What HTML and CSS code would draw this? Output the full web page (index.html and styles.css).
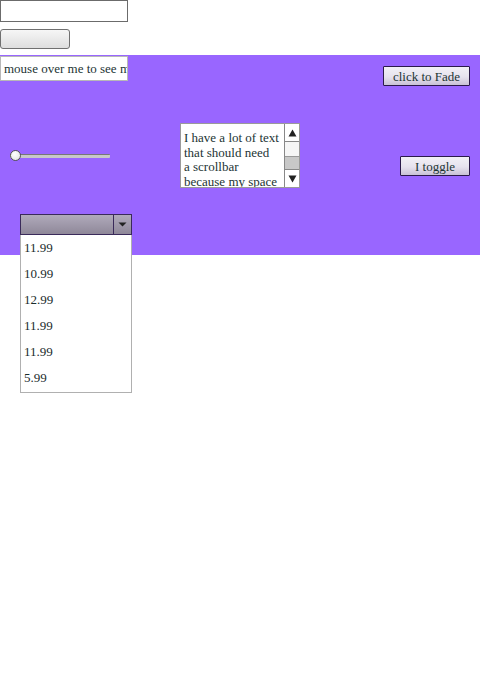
FILE: index.html
```html
<!DOCTYPE html>
<html>
<head>
<meta charset="utf-8">
<link rel="stylesheet" href="styles.css">
</head>
<body>
<div class="page">
  <div class="top">
    <input class="field" type="text">
    <button class="plain-btn"></button>
  </div>
  <div class="purple">
    <div class="row row-top">
      <div class="hover-field">mouse over me to see more text here</div>
      <button class="ui-btn fade-btn">click to Fade</button>
    </div>
    <div class="row row-mid">
      <div class="slider">
        <div class="track"></div>
        <div class="thumb"></div>
      </div>
      <div class="textbox">
        <div class="textbox-text"><span class="ln">I have a lot of text</span><span class="ln">that should need</span><span class="ln">a scrollbar</span><span class="ln">because my space</span><span class="ln">is limited</span></div>
        <div class="scrollbar">
          <div class="sb-btn sb-up"><svg width="9" height="8" viewBox="0 0 9 8"><path d="M4.5 0.5 L8.5 7.5 L0.5 7.5 Z" fill="#222"/></svg></div>
          <div class="sb-track"><div class="sb-thumb"></div></div>
          <div class="sb-btn sb-down"><svg width="9" height="8" viewBox="0 0 9 8"><path d="M0.5 0.5 L8.5 0.5 L4.5 7.5 Z" fill="#222"/></svg></div>
        </div>
      </div>
      <button class="ui-btn toggle-btn">I toggle</button>
    </div>
    <div class="row row-bottom">
      <div class="combo">
        <div class="combo-box">
          <div class="combo-value"></div>
          <div class="combo-arrow"><svg width="9" height="5" viewBox="0 0 9 5"><path d="M0.5 0.5 L8.5 0.5 L4.5 4.5 Z" fill="#222"/></svg></div>
        </div>
        <ul class="combo-list">
          <li>11.99</li>
          <li>10.99</li>
          <li>12.99</li>
          <li>11.99</li>
          <li>11.99</li>
          <li>5.99</li>
        </ul>
      </div>
    </div>
  </div>
</div>
</body>
</html>
```
FILE: styles.css
```css
html, body {
  margin: 0;
  padding: 0;
  background: #fff;
}
body {
  font-family: "Liberation Serif", "Times New Roman", serif;
  color: #1c3434;
  min-height: 700px;
}
.page {
  width: 480px;
}
.top {
  display: flex;
  flex-direction: column;
  align-items: flex-start;
}
.field {
  box-sizing: border-box;
  width: 128px;
  height: 22px;
  margin: 0;
  border: 1px solid #6b6b6b;
  background: #fff;
  padding: 0;
}
.plain-btn {
  box-sizing: border-box;
  width: 70px;
  height: 20px;
  margin: 7px 0 6px 0;
  border: 1px solid #707070;
  border-radius: 3px;
  background: linear-gradient(#f6f6f6, #dedede);
  padding: 0;
}
.purple {
  background: #9966ff;
  height: 200px;
  position: relative;
  z-index: 1;
}
.row {
  display: flex;
  align-items: flex-start;
}
.row-top {
  justify-content: space-between;
  padding: 1px 10px 0 0;
  height: 41px;
}
.hover-field {
  box-sizing: border-box;
  width: 128px;
  height: 25px;
  border: 1px solid #b8b8b8;
  background: #fff;
  font-size: 13px;
  line-height: 23px;
  padding-left: 3px;
  white-space: nowrap;
  overflow: hidden;
}
.ui-btn {
  box-sizing: border-box;
  font-family: "Liberation Serif", "Times New Roman", serif;
  font-size: 13px;
  color: #1c3434;
  border: 1px solid #2a1a4a;
  border-radius: 1px;
  background: linear-gradient(#f2f0f6 0%, #e6e2ee 55%, #c9c2d6 100%);
  padding: 1px 0 0 0;
  margin: 0;
  height: 20px;
  line-height: 17px;
}
.fade-btn {
  width: 87px;
  margin-top: 10px;
}
.row-mid {
  height: 117px;
  padding-left: 10px;
  padding-right: 10px;
  align-items: flex-start;
}
.slider {
  position: relative;
  width: 100px;
  height: 12px;
  margin-top: 53px;
}
.track {
  position: absolute;
  left: 0;
  right: 0;
  top: 4px;
  height: 3px;
  background: #c8c8c8;
  border-top: 1px solid #777;
  border-radius: 1px;
}
.thumb {
  position: absolute;
  left: 0;
  top: 0;
  box-sizing: border-box;
  width: 11px;
  height: 11px;
  border-radius: 50%;
  border: 1px solid #555;
  background: radial-gradient(circle at 40% 35%, #ffffff, #e0e0e0);
}
.textbox {
  box-sizing: border-box;
  display: flex;
  width: 120px;
  height: 65px;
  margin-left: 70px;
  margin-top: 26px;
  border: 1px solid #9a9a9a;
  background: #fff;
}
.textbox-text {
  flex: 1;
  overflow: hidden;
  font-size: 13px;
  line-height: 14.5px;
  padding: 7px 0 0 3px;
}
.ln {
  display: block;
  white-space: nowrap;
}
.scrollbar {
  box-sizing: border-box;
  width: 15px;
  display: flex;
  flex-direction: column;
  border-left: 1px solid #888;
  background: #fff;
}
.sb-btn {
  height: 17px;
  display: flex;
  align-items: center;
  justify-content: center;
  background: #fff;
}
.sb-up {
  border-bottom: 1px solid #888;
}
.sb-down {
  border-top: 1px solid #888;
}
.sb-track {
  flex: 1;
  display: flex;
  flex-direction: column;
  justify-content: flex-end;
  background: #f6f6f6;
}
.sb-thumb {
  height: 12px;
  background: #c8c8c8;
  border-top: 1px solid #999;
}
.toggle-btn {
  width: 70px;
  margin-left: auto;
  margin-top: 59px;
}
.row-bottom {
  padding-left: 20px;
}
.combo {
  position: relative;
  width: 112px;
}
.combo-box {
  box-sizing: border-box;
  display: flex;
  height: 21px;
  border: 1px solid #3a2a5a;
  background: linear-gradient(#b0aabb, #8f8899);
}
.combo-value {
  flex: 1;
}
.combo-arrow {
  width: 17px;
  border-left: 1px solid #3a2a5a;
  display: flex;
  align-items: center;
  justify-content: center;
}
.combo-list {
  position: absolute;
  left: 0;
  top: 21px;
  z-index: 5;
  box-sizing: border-box;
  width: 112px;
  margin: 0;
  padding: 0 0 1px 0;
  list-style: none;
  background: #fff;
  border: 1px solid #b0b0b0;
  border-top: none;
}
.combo-list li {
  font-size: 13px;
  height: 26px;
  line-height: 26px;
  padding-left: 3px;
  color: #1a2c2c;
}
```
